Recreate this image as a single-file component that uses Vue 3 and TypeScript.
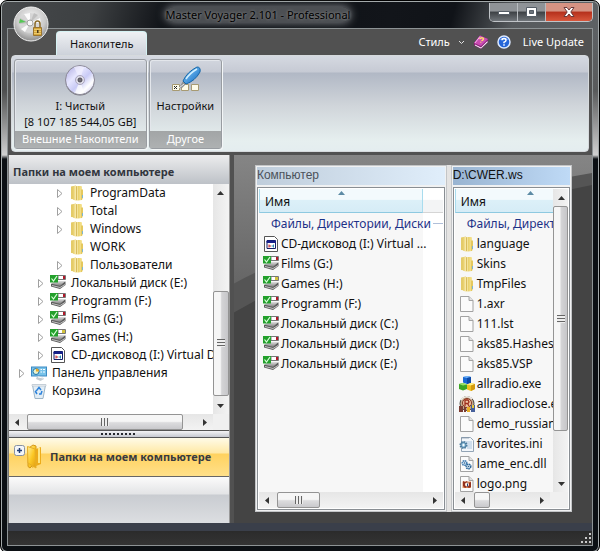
<script setup lang="ts">
interface TreeNode {
  label: string
  icon: string
  level: number
  leaf?: boolean
}
interface Entry {
  name: string
  icon: string
}

const tree: TreeNode[] = [
  { label: 'ProgramData', icon: 'folder', level: 2 },
  { label: 'Total', icon: 'folder', level: 2 },
  { label: 'Windows', icon: 'folder', level: 2 },
  { label: 'WORK', icon: 'folder', level: 2, leaf: true },
  { label: 'Пользователи', icon: 'folder', level: 2 },
  { label: 'Локальный диск (E:)', icon: 'drive', level: 1 },
  { label: 'Programm (F:)', icon: 'drive', level: 1 },
  { label: 'Films (G:)', icon: 'drive', level: 1 },
  { label: 'Games (H:)', icon: 'drive-free', level: 1 },
  { label: 'CD-дисковод (I:) Virtual Drive', icon: 'virtual', level: 1 },
  { label: 'Панель управления', icon: 'panel', level: 0 },
  { label: 'Корзина', icon: 'bin', level: 0, leaf: true },
]

const computer: Entry[] = [
  { name: 'CD-дисковод (I:) Virtual ...', icon: 'virtual' },
  { name: 'Films (G:)', icon: 'drive' },
  { name: 'Games (H:)', icon: 'drive-free' },
  { name: 'Programm (F:)', icon: 'drive' },
  { name: 'Локальный диск (C:)', icon: 'drive' },
  { name: 'Локальный диск (D:)', icon: 'drive' },
  { name: 'Локальный диск (E:)', icon: 'drive' },
]

const files: Entry[] = [
  { name: 'language', icon: 'folder' },
  { name: 'Skins', icon: 'folder' },
  { name: 'TmpFiles', icon: 'folder' },
  { name: '1.axr', icon: 'file' },
  { name: '111.lst', icon: 'file' },
  { name: 'aks85.Hashes', icon: 'file' },
  { name: 'aks85.VSP', icon: 'file' },
  { name: 'allradio.exe', icon: 'cubes' },
  { name: 'allradioclose.exe', icon: 'radio' },
  { name: 'demo_russian', icon: 'file' },
  { name: 'favorites.ini', icon: 'ini' },
  { name: 'lame_enc.dll', icon: 'dll' },
  { name: 'logo.png', icon: 'png' },
]

const indent = (n: TreeNode) => ({ paddingLeft: `${10 + n.level * 19}px` })
</script>

<template>
  <div class="window">
    <svg class="defs" width="0" height="0" aria-hidden="true">
      <defs>
        <linearGradient id="gold" x1="0" x2="1"><stop offset="0" stop-color="#e6cb62" /><stop offset=".4" stop-color="#fdf4c6" /><stop offset=".6" stop-color="#ead26e" /><stop offset="1" stop-color="#f7e596" /></linearGradient>
        <linearGradient id="orange" x1="0" x2="1" y2="1"><stop offset="0" stop-color="#fff0a0" /><stop offset=".5" stop-color="#fcc926" /><stop offset="1" stop-color="#e09a10" /></linearGradient>
        <linearGradient id="metal" x1="0" y1="0" x2="0" y2="1"><stop offset="0" stop-color="#dedede" /><stop offset="1" stop-color="#7a7a7a" /></linearGradient>
        <linearGradient id="disc" x1="0" y1="0" x2="1" y2="1"><stop offset="0" stop-color="#a8a4dc" /><stop offset=".35" stop-color="#e6e6ff" /><stop offset=".55" stop-color="#c9cbf6" /><stop offset=".75" stop-color="#fff" /><stop offset="1" stop-color="#b9b6e8" /></linearGradient>
        <linearGradient id="blue" x1="0" y1="0" x2="1" y2="1"><stop offset="0" stop-color="#8fd4ff" /><stop offset="1" stop-color="#0d66c0" /></linearGradient>
        <linearGradient id="canvas" x1="0" y1="0" x2="0" y2="1"><stop offset="0" stop-color="#858585" /><stop offset="1" stop-color="#666" /></linearGradient>
        <symbol id="folder" viewBox="0 0 16 16">
          <path d="M2 1.500 7 .5v14L2 14z" fill="#e4cb68" />
          <path d="M4 1h8.500l.5 1v13l-6 .8L4 14.500z" fill="url(#gold)" />
          <path d="M7.500 1.200v14" stroke="#d8bb5c" fill="none" />
          <path d="M12 4.500h2v8l-1 2.500h-1z" fill="#e4c85e" />
          <path d="M13.500 10v3" stroke="#7fb6d2" />
        </symbol>
        <symbol id="drive-base" viewBox="0 0 16 16">
          <path d="M1 9 7 6.500h8.500v3.500L10 14 1 11.500z" fill="#5c5c5c" />
          <path d="M1 8.500 7 6h8.500L10 11z" fill="url(#metal)" />
          <path d="m2 10.500 8 2 5-3" stroke="#c4c4c4" fill="none" />
          <path d="M8 .5h7.500v4H8z" fill="#fff" stroke="#777" />
          <path d="M0 0h8v7.500H0z" fill="#23a02c" />
          <path d="m1.500 3.500 2 2.500L7 1" stroke="#dcffdc" stroke-width="1.200" fill="none" />
        </symbol>
        <symbol id="drive" viewBox="0 0 16 16"><use href="#drive-base" /><path d="M13 1h2v3h-2z" fill="#b11829" /></symbol>
        <symbol id="drive-free" viewBox="0 0 16 16"><use href="#drive-base" /><path d="M12 1h3v3h-3z" fill="#d2c23c" /></symbol>
        <symbol id="file" viewBox="0 0 16 16">
          <path d="M1.500.5h8.500l4 4v11h-12.500z" fill="#fbfbfb" stroke="#a2a2a2" />
          <path d="M10 .5v4h4" fill="#e2e2e2" stroke="#a2a2a2" />
        </symbol>
        <symbol id="virtual" viewBox="0 0 16 16">
          <path d="M1.500.5h10l3 3v12h-13z" fill="#fff" stroke="#555" />
          <path d="M4 4.500h8.500v8H4z" fill="#fff" stroke="#111a66" />
          <path d="M4 5h8.500v1.500H4z" fill="#16208a" stroke="#16208a" />
          <path d="M5.500 8.500h1v3h-1zm1 1h1.500v1H6.500z" fill="#c4232c" /><path d="M10 8.500h1v3h-1zm-1.500 1H10v1H8.500z" fill="#2e8cb4" />
        </symbol>
        <symbol id="panel" viewBox="0 0 16 16">
          <path d="M0 1.500h16v10H0z" fill="#3b8ac4" /><path d="M1 2.500h14v8H1z" fill="#79c3e9" />
          <circle cx="5" cy="6.500" r="3" fill="#e6f2d0" stroke="#2476ac" /><path d="M5 6.500v-3a3 3 0 0 1 3 3z" fill="#eaaa29" />
          <path d="M9.500 4.500h1.500m1 0h2M9.500 7h1.500m1 0h2" stroke="#fff" />
          <path d="M6 11.500h5l2 2.500-3.500 2L5 14z" fill="#c4cdd3" /><path d="m7 12 5 1" stroke="#fff" />
        </symbol>
        <symbol id="bin" viewBox="0 0 16 16">
          <path d="M1.500 2h13L12 15.500H4z" fill="#e2edf5" stroke="#9cb4c6" /><path d="M1 1.500h14v1.500H1z" fill="#f4f7f9" stroke="#b2bdc7" stroke-width=".6" />
          <path d="m6 7 2-2.500L10 7m1 1-1 3H8m-2 0-1.500-2.500L6 7" fill="none" stroke="#2d83dc" stroke-width="1.500" />
        </symbol>
        <symbol id="cubes" viewBox="0 0 16 16">
          <path d="M4 1 9 0l3 1v6L8 8 4 6.500z" fill="#1868d2" /><path d="m4 1 5-1 3 1-4 1z" fill="#79b9fb" /><path d="m8 2 4-1v6L8 8z" fill="#0c49a6" />
          <path d="m0 8 4-1 4 1.500V13l-4 1.500L0 13z" fill="#3ca624" /><path d="m0 8 4-1 4 1.500-4 1z" fill="#9ce467" />
          <path d="m8 8.500 4-1.500 4 1v5l-4 2-4-1.500z" fill="#f0c01c" /><path d="m8 8.500 4-1.500 4 1-4 1.500z" fill="#fff085" /><path d="m12 9.500 4-1.500v5l-4 2z" fill="#d39a0d" />
        </symbol>
        <symbol id="radio" viewBox="0 0 16 16">
          <circle cx="8" cy="7.500" r="7" fill="#c4a98c" stroke="#4c4740" /><path d="M2 4a7 7 0 0 1 11-1" stroke="#eeeae4" stroke-width="1.500" fill="none" />
          <circle cx="8" cy="7" r="4.500" fill="#f0c6a6" stroke="#833522" /><path d="M6 10V4h3l1 2-1 1.500H6m2.500 0L10 10" stroke="#9c2d1c" stroke-width="1.300" fill="none" />
          <path d="M0 10h4v6H0zm5 1h2v5H5z" fill="#7b3c32" /><path d="M8 11h3v5H8z" fill="#e9ac26" /><path d="M12 9h4v7h-4z" fill="#46609b" /><path d="M13 9h2v3h-2z" fill="#e8c73b" />
        </symbol>
        <symbol id="ini" viewBox="0 0 16 16">
          <path d="M2.500 1.500h9l3 3v11h-12z" fill="#f2f6fa" stroke="#93a4b5" /><path d="M3 1v2m2-2v2m2-2v2m2-2v2" stroke="#708598" stroke-width=".6" />
          <path d="M4 6h9M8 8h5m-5 2h5m-5 2h5" stroke="#a9c4de" />
          <circle cx="4.500" cy="9" r="3" fill="#b9dbef" stroke="#4b7c9f" stroke-width="2" stroke-dasharray="1.500 .8" /><circle cx="4.500" cy="9" r="2.500" fill="#9bc8e2" stroke="#4b7c9f" /><circle cx="4.500" cy="9" r="1" fill="#fff" />
        </symbol>
        <symbol id="dll" viewBox="0 0 16 16">
          <use href="#file" /><circle cx="5.500" cy="7" r="2.300" fill="#d6e9f7" stroke="#437eb3" stroke-width="1.500" stroke-dasharray="1.500 .5" /><circle cx="9.500" cy="10.500" r="2.300" fill="#d6e9f7" stroke="#2d6799" stroke-width="1.500" stroke-dasharray="1.500 .5" />
          <circle cx="5.500" cy="7" r=".8" fill="#315f88" /><circle cx="9.500" cy="10.500" r=".8" fill="#315f88" />
        </symbol>
        <symbol id="png" viewBox="0 0 16 16">
          <use href="#file" /><path d="M3.500 5.500h8.500v6.500H3.500z" fill="#e49762" /><path d="m4 5 2 1 2-1 1 2 3-1v5l-2 1-2-1-2 1-2-2z" fill="#93301d" /><circle cx="8" cy="8.500" r="2" fill="#fff2de" /><path d="M8 7.500h1v3H8z" fill="#233f83" />
        </symbol>
      </defs>
    </svg>

    <header class="titlebar">
      <button class="orb" type="button" aria-label="Master Voyager">
        <svg viewBox="0 0 36 36" width="36" height="36">
          <defs>
            <radialGradient id="orb" cx=".5" cy=".35" r=".65"><stop offset="0" stop-color="#f6f6f6" /><stop offset=".65" stop-color="#c9c9c9" /><stop offset="1" stop-color="#8c8c8c" /></radialGradient>
          </defs>
          <circle cx="18" cy="18" r="17" fill="url(#orb)" stroke="#f2f2f2" />
          <ellipse cx="17" cy="17" rx="11" ry="10" fill="#d6d6d6" />
          <path d="m17 17-6-9 6-1zM17 17l10-5 1 5zM17 17l-5 9-4-3z" fill="#fbfbfb" />
          <path d="m17 17-10-5-1 6zM17 17l4-10 4 2z" fill="#bfbfbf" />
          <path d="m7 13 6 3-7 1z" fill="#55c755" />
          <circle cx="17" cy="17" r="3" fill="#f7f7f7" stroke="#a2a2a2" />
          <path d="M22 22v-4q0-3 2.500-3t2.500 3v4" fill="none" stroke="#8c6c2b" stroke-width="1.500" />
          <path d="M20.500 21.500h8v8h-8z" fill="#d6a73b" stroke="#9a7430" />
          <path d="M21 23.500h7m-7 2h7m-7 2h7" stroke="#f2d985" stroke-width=".7" />
          <path d="M24 24h1.500v3H24z" fill="#4b3818" />
        </svg>
      </button>
      <h1 class="caption"><span>Master Voyager 2.101 - Professional</span></h1>
      <div class="winbtns">
        <button type="button" aria-label="Свернуть"><svg width="14" height="12" viewBox="0 0 14 12"><path d="M1.500 5.500h11v3h-11z" fill="#fff" stroke="#555d66" /></svg></button>
        <button type="button" aria-label="Развернуть"><svg width="14" height="12" viewBox="0 0 14 12"><path d="M1.500 1.500h10v9h-10z" fill="#fff" stroke="#555d66" /><path d="M4.500 4.500h4v3h-4z" fill="#6c737b" stroke="#555d66" /></svg></button>
        <button type="button" class="close" aria-label="Закрыть"><svg width="14" height="12" viewBox="0 0 14 12"><path d="M2 1.500h3l2 2.500 2-2.500h3L8.800 6 12 10.500H9L7 8l-2 2.500H2L5.200 6z" fill="#fff" stroke="#6b3a3a" /></svg></button>
      </div>
    </header>

    <div class="client">
      <nav class="tabs">
        <button class="tab" type="button">Накопитель</button>
        <div class="links">
          <button class="link style" type="button">Стиль
            <svg width="7" height="5" viewBox="0 0 7 5"><path d="m1 1 2.500 2.500L6 1" fill="none" stroke="#e4e4e4" /></svg>
          </button>
          <button class="link" type="button" aria-label="Справка">
            <svg width="16" height="16" viewBox="0 0 16 16">
              <path d="M1 9 7 1.500 15 5v3l-7 7-7-3.500z" fill="#8a2378" /><path d="m2 10.500 6 3 6.500-6.500v1.500L8 14.500l-6-3z" fill="#fff" />
              <path d="M1 9 7 1.500 15 5l-7 7z" fill="#c94bb2" /><path d="m2 9 5-6.500" stroke="#f6b1e9" />
              <path d="M6.500 5q2-2 3.500-1t-1.500 3m-1 1.500.5-.5" stroke="#ffe36a" stroke-width="1.500" fill="none" />
            </svg>
          </button>
          <button class="link" type="button" aria-label="О программе">
            <svg width="14" height="14" viewBox="0 0 14 14">
              <circle cx="7" cy="7" r="6" fill="#2565d8" stroke="#dce9ff" stroke-width="1.500" /><path d="M2.500 5q4.500-5 9 0-4-1-9 0" fill="#76a7f6" />
              <path d="M5 5.200Q5 3.500 7 3.500t2 1.700Q9 6.500 7 7.300v1m0 1v1.500" fill="none" stroke="#fff" stroke-width="1.500" />
            </svg>
          </button>
          <a class="link update" href="#update">Live Update</a>
        </div>
      </nav>

      <section class="ribbon">
        <div class="group">
          <button class="tool" type="button">
            <svg width="32" height="32" viewBox="0 0 32 32">
              <circle cx="16" cy="17" r="14.500" fill="#77757e" /><circle cx="16" cy="16" r="14.500" fill="url(#disc)" stroke="#8c8a98" />
              <path d="M16 16 10 3q5-2 10 0z" fill="#f5f4ff" opacity=".6" /><path d="m16 16 4 13q-4 2-9 0z" fill="#fff" opacity=".7" />
              <circle cx="16" cy="16" r="4.500" fill="#dedde9" stroke="#aaa6be" /><circle cx="16" cy="16" r="2" fill="#716e78" stroke="#4e4c54" />
            </svg>
            <span>I: Чистый</span>
            <span>[8 107 185 544,05 GB]</span>
          </button>
          <h2>Внешние Накопители</h2>
        </div>
        <div class="group">
          <button class="tool" type="button">
            <svg width="32" height="32" viewBox="0 0 32 32">
              <path d="M3.500 20.500h7v6h-7zm9 0h7v6h-7zm10 0h7v6h-7z" fill="#fdfbe9" stroke="#a79a72" />
              <path d="m5 22 3 3m0-3-3 3" stroke="#222" />
              <path d="m10 24 4-7 3 3-4 4z" fill="#8b8f92" /><path d="m10 24 5-4" stroke="#eee" />
              <path d="M14 17q4-9 14-14Q32 3 31 8q-5 9-14 12z" fill="url(#blue)" stroke="#1667a8" /><path d="M17 15q4-6 11-10" stroke="#d4f0ff" stroke-width="1.500" fill="none" />
            </svg>
            <span>Настройки</span>
          </button>
          <h2>Другое</h2>
        </div>
      </section>

      <main class="work">
        <aside class="side">
          <h2 class="side-title">Папки на моем компьютере</h2>
          <div class="tree-box">
            <ul class="tree">
              <li v-for="n in tree" :key="n.label" :style="indent(n)">
                <svg class="arrow" width="6" height="9" viewBox="0 0 6 9"><path v-if="!n.leaf" d="M.5.5v8L5 4.500z" fill="#fff" stroke="#a0a0a0" /></svg>
                <svg width="16" height="16"><use :href="`#${n.icon}`" /></svg>
                <span>{{ n.label }}</span>
              </li>
            </ul>
            <div class="vbar">
              <button type="button" aria-label="Вверх"><svg width="7" height="4" viewBox="0 0 7 4"><path d="M0 4 3.500 0 7 4z" /></svg></button>
              <i class="before"></i><div class="thumb"><i></i></div><i class="after"></i>
              <button type="button" aria-label="Вниз"><svg width="7" height="4" viewBox="0 0 7 4"><path d="M0 0h7L3.500 4z" /></svg></button>
            </div>
          </div>
          <div class="hbar side-h">
            <button type="button" aria-label="Влево"><svg width="4" height="7" viewBox="0 0 4 7"><path d="M4 0v7L0 3.500z" /></svg></button>
            <div class="thumb"><i></i></div><i class="rest"></i>
            <button type="button" aria-label="Вправо"><svg width="4" height="7" viewBox="0 0 4 7"><path d="M0 0v7l4-3.500z" /></svg></button>
            <i class="corner"></i>
          </div>
          <div class="grip"><i></i></div>
          <button class="section" type="button">
            <svg width="30" height="26" viewBox="0 0 30 26">
              <path d="M14 4.500 19 1l3 1v16l-6 6-2-1.500z" fill="url(#orange)" stroke="#d59818" />
              <path d="m22 5 5-2v17l-5 2-4 2z" fill="#edac1b" /><path d="M13.500 2.500 21 5l1 19-8-5z" fill="url(#orange)" stroke="#e7ae26" /><path d="M25 4v15" stroke="#ffe783" stroke-width="2" />
              <rect x=".5" y="1.500" width="10" height="10" rx="2" fill="#f4f6f9" stroke="#8692a5" /><path d="M3 6.500h5M5.500 4v5" stroke="#233e75" stroke-width="1.500" />
            </svg>
            <span>Папки на моем компьютере</span>
          </button>
          <div class="side-foot"></div>
        </aside>

        <div class="canvas">
          <svg class="backdrop" viewBox="0 0 357 367" preserveAspectRatio="none" aria-hidden="true">
            <path d="M0 0h357v367H0z" fill="#444" />
            <path d="M0 0h357v30Q150 70 0 157z" fill="#555" />
            <path d="M0 0h357v18Q140 55 0 128z" fill="url(#canvas)" />
          </svg>
          <div class="panes">
            <section class="pane first">
              <h3>Компьютер</h3>
              <div class="frame">
                <div class="listrow">
                  <div class="list">
                    <table>
                      <colgroup><col class="name"><col></colgroup>
                      <thead><tr><th class="sorted" scope="col">Имя<svg width="7" height="4" viewBox="0 0 7 4"><path d="M0 4 3.500 0 7 4z" fill="#5d8ba5" /></svg></th><td class="blank"></td></tr></thead>
                      <tbody>
                        <tr class="cat"><th scope="rowgroup">Файлы, Директории, Диски</th><td><i></i></td></tr>
                        <tr v-for="e in computer" :key="e.name"><td><div class="entry"><svg width="16" height="16"><use :href="`#${e.icon}`" /></svg><span>{{ e.name }}</span></div></td><td></td></tr>
                      </tbody>
                    </table>
                  </div>
                </div>
                <div class="hbar first-h">
                  <button type="button" aria-label="Влево"><svg width="4" height="7" viewBox="0 0 4 7"><path d="M4 0v7L0 3.500z" /></svg></button>
                  <div class="thumb"><i></i></div><i class="rest"></i>
                  <button type="button" aria-label="Вправо"><svg width="4" height="7" viewBox="0 0 4 7"><path d="M0 0v7l4-3.500z" /></svg></button>
                </div>
              </div>
            </section>
            <section class="pane second">
              <h3>D:\CWER.ws</h3>
              <div class="frame">
                <div class="listrow">
                  <div class="list">
                    <table>
                      <thead><tr><th class="sorted" scope="col">Имя<svg width="7" height="4" viewBox="0 0 7 4"><path d="M0 4 3.500 0 7 4z" fill="#5d8ba5" /></svg></th></tr></thead>
                      <tbody>
                        <tr class="cat"><th scope="rowgroup">Файлы, Директории</th></tr>
                        <tr v-for="e in files" :key="e.name"><td><div class="entry"><svg width="16" height="16"><use :href="`#${e.icon}`" /></svg><span>{{ e.name }}</span></div></td></tr>
                      </tbody>
                    </table>
                  </div>
                  <div class="vbar">
                    <button type="button" aria-label="Вверх"><svg width="7" height="4" viewBox="0 0 7 4"><path d="M0 4 3.500 0 7 4z" /></svg></button>
                    <div class="thumb"><i></i></div><i class="after"></i>
                    <button type="button" aria-label="Вниз"><svg width="7" height="4" viewBox="0 0 7 4"><path d="M0 0h7L3.500 4z" /></svg></button>
                  </div>
                </div>
                <div class="hbar second-h">
                  <button type="button" aria-label="Влево"><svg width="4" height="7" viewBox="0 0 4 7"><path d="M4 0v7L0 3.500z" /></svg></button>
                  <div class="thumb"></div><i class="rest"></i>
                  <button type="button" aria-label="Вправо"><svg width="4" height="7" viewBox="0 0 4 7"><path d="M0 0v7l4-3.500z" /></svg></button>
                  <i class="corner"></i>
                </div>
              </div>
            </section>
          </div>
        </div>
      </main>

      <footer class="status">
        <svg width="11" height="11" viewBox="0 0 11 11"><path d="M8 0h2v2H8zM4 4h2v2H4zm4 0h2v2H8zM0 8h2v2H0zm4 0h2v2H4zm4 0h2v2H8z" fill="#c9c9c9" /></svg>
      </footer>
    </div>
  </div>
</template>

<style>
body { background: #fff; }
</style>

<style scoped>
* { box-sizing: border-box; }
h1, h2, h3, ul { margin: 0; padding: 0; font-weight: 400; font-size: 11px; list-style: none; }
button { margin: 0; padding: 0; border: 0; background: none; font: inherit; color: inherit; }
svg { display: block; flex: none; }
.defs { position: absolute; }

.window {
  position: relative;
  display: flex;
  flex-direction: column;
  min-height: 100vh;
  padding: 2px 6px 6px;
  border: 1px solid #000;
  border-radius: 7px;
  background: linear-gradient(180deg, transparent 28px, #5559 90px, #d0d0d0 154px, #0c1014 158px), linear-gradient(105deg, #46494b 0, #3d4042 90px, #0c0f14 170px, #12151a 380px, #101318 440px, #565a5d 500px, #6a6d70 100%);
  box-shadow: inset 0 0 0 1px #a3a9aa;
  color: #111;
  font: 12px/16px "Noto Sans", "Open Sans", sans-serif;
}
.titlebar { display: flex; height: 25px; align-items: flex-start; padding-left: 44px; }
.orb { position: absolute; left: 12px; top: 5px; z-index: 2; }
.caption { flex: 1; padding: 4px 24px 0 0; text-align: center; color: #000; line-height: 16px; white-space: nowrap; }
.caption span { border-radius: 8px; background: #74787c99; box-shadow: 0 0 9px 1px #7d8185; text-shadow: 0 0 3px #999; }
.winbtns { display: flex; height: 19px; border: 1px solid #c0c4c8; border-top: 0; border-radius: 0 0 5px 5px; overflow: hidden; }
.winbtns button { display: flex; width: 28px; align-items: center; justify-content: center; border-right: 1px solid #b8bcc0; background: linear-gradient(#8f9397 0 45%, #3d4145 50%, #70757a); }
.winbtns button.close { width: 46px; border: 0; background: linear-gradient(#d69383 0 45%, #b5301c 50%, #d8573c); }

.client { display: flex; flex: 1; flex-direction: column; border: 1px solid #8d9395; background: #515151; }
.tabs { display: flex; height: 26px; align-items: flex-end; padding: 0 8px 0 48px; justify-content: space-between; font-size: 11px; }
.tab { height: 24px; padding: 0 13px; border: 1px solid #d5f2f3; border-bottom: 0; border-radius: 4px 4px 0 0; background: linear-gradient(#eef0f3, #cdd2da); }
.links { display: flex; height: 26px; align-items: center; gap: 8px; color: #fff; }
.link { color: #fff; text-decoration: none; }
.style { display: flex; align-items: center; gap: 8px; }
.update { padding-left: 4px; }

.ribbon { display: flex; gap: 2px; height: 97px; margin: 0 3px; padding: 3px 2px 2px; border: 1px solid #d6dadd; border-radius: 4px; background: linear-gradient(#d5d9e1 0, #c6cad4 16px, #b1b8c5 17px, #d0d5da 50px, #e6efef 85px, #e4edef); font-size: 11px; }
.group { display: flex; flex-direction: column; border: 1px solid #989ca1; border-radius: 3px; box-shadow: 1px 1px 0 #f3f6f7, inset 1px 1px 0 #e3e6eb; }
.tool { display: flex; flex: 1; flex-direction: column; align-items: center; padding: 4px 7px 0; }
.tool svg { margin-bottom: 2px; }
.group h2 { height: 17px; padding: 0 7px; background: linear-gradient(#a2a5a6, #aeb1b2); color: #fff; text-align: center; line-height: 16px; white-space: nowrap; }

.work { display: flex; flex: 1; margin-top: 3px; }
.side { display: flex; flex-direction: column; width: 38%; border-left: 1px solid #777; border-right: 1px solid #999; }
.side-title { height: 29px; padding: 4px 4px 0; background: linear-gradient(#ececec 0, #e4e5e7 5px, #bdc1c7); color: #32363e; font-weight: 700; line-height: 26px; white-space: nowrap; }
.tree-box { display: flex; flex: 1; background: #fff; }
.tree { flex: 1; width: 0; overflow: hidden; font-size: 12px; }
.tree li { display: flex; height: 18px; align-items: center; white-space: nowrap; }
.arrow { margin-right: 6px; }
.tree span { margin-left: 5px; }

.vbar, .hbar { display: flex; background: linear-gradient(90deg, #e6e6e6, #f3f3f3); fill: #333; }
.vbar { flex-direction: column; width: 16px; }
.hbar { height: 16px; background: linear-gradient(#e6e6e6, #f3f3f3); }
.vbar button, .hbar button { display: flex; width: 16px; height: 17px; align-items: center; justify-content: center; }
.hbar button { height: 16px; }
.thumb { display: flex; align-items: center; justify-content: center; border: 1px solid #949494; border-radius: 2px; background: linear-gradient(90deg, #f6f6f6 0 45%, #d4d4d6 55%, #c6c6c9); }
.hbar .thumb { background: linear-gradient(#f6f6f6 0 45%, #dcdcde 55%, #c9c9cc); }
.thumb i { width: 8px; height: 8px; background: repeating-linear-gradient(#666 0 1px, #eee 1px 3px); }
.hbar .thumb i { background: repeating-linear-gradient(90deg, #666 0 1px, #eee 1px 3px); }
.side .before { flex: 90; }
.side .vbar .thumb { flex: 104; }
.side .after { flex: 1; }
.side-h .thumb { flex: 156; margin-left: 2px; }
.side-h .rest { flex: 14; }
.side-h .corner { width: 16px; background: #f0f0f0; }

.grip { display: flex; height: 8px; align-items: center; justify-content: center; border: 1px solid #555; border-width: 1px 0; background: linear-gradient(#f4f4f6, #c5c8d0); }
.grip i { width: 35px; height: 2px; background: repeating-linear-gradient(90deg, #26282e 0 2px, transparent 2px 4px); }
.section { display: flex; height: 39px; align-items: center; gap: 6px; padding-left: 5px; border-bottom: 1px solid #666; background: linear-gradient(#fffbe8 0, #ffe9a6 15px, #ffd25f 16px, #ffe08a); color: #383a40; font-size: 11px; font-weight: 700; white-space: nowrap; }
.side-foot { height: 46px; background: linear-gradient(#fbfbfb 0, #e3e4e6 17px, #c9ccd1 18px, #dcdee1); }

.canvas { display: grid; flex: 1; margin-left: 4px; }
.backdrop { grid-area: 1 / 1; width: 100%; height: 100%; min-height: 0; }
.panes { grid-area: 1 / 1; display: flex; gap: 4px; margin: 10px 20px 11px 21px; background: #e4e3e2; z-index: 1; }
.pane { display: flex; flex-direction: column; width: 0; padding: 2px; background: #f0f1f2; box-shadow: inset 0 0 0 1px #c3c5c7; }
.first { flex: 192; }
.second { flex: 120; }
.pane h3 { height: 18px; margin-bottom: 2px; background: linear-gradient(90deg, #bfcddb, #e0eefb); color: #4c525a; font: 12px/16px "Liberation Sans", sans-serif; }
.pane.second h3 { background: linear-gradient(90deg, #99b4d1, #bfdaf6); color: #111; }
.frame { display: flex; flex: 1; flex-direction: column; border: 1px solid #898e93; padding: 1px; background: #fff; }
.listrow { display: flex; flex: 1; min-height: 240px; }
.list { flex: 1 1 0; width: 0; height: 0; min-height: 100%; overflow: hidden; background: #fff; }
.first .list { background: linear-gradient(90deg, #f7f7f7 164px, #fff 164px); }
.second .list { background: #f7f7f7; }
table { width: 100%; border-collapse: separate; border-spacing: 0; table-layout: fixed; }
.second table { width: 150px; }
col.name { width: 164px; }
th, td { padding: 0; font-weight: 400; text-align: left; white-space: nowrap; }
thead th, thead td { position: relative; height: 24px; border-bottom: 1px solid #8ec9e0; background: linear-gradient(#f3fafd 0 45%, #dcf0f8 50%, #d6ecf6); }
thead th { padding: 2px 0 0 5px; border-left: 1px solid #a9dcee; border-right: 1px solid #a9dcee; }
thead svg { position: absolute; top: 2px; left: 50%; margin-left: -3px; }
thead td.blank { border-color: #d5d5d5; background: linear-gradient(#fff 45%, #f3f4f5 50%); }
.cat th { height: 21px; padding-left: 12px; color: #1e3287; }
.cat i { display: block; height: 1px; margin-left: 10px; background: #b0bfd9; }
.entry { display: flex; height: 20px; align-items: center; gap: 2px; padding-left: 4px; }
.second .vbar { width: 15px; }
.second .vbar .thumb { flex: 224; }
.second .vbar .after { flex: 44; }
.first-h .thumb { flex: 43; margin-left: 2px; }
.first-h .rest { flex: 110; }
.second-h .thumb { flex: 15; margin-left: 3px; }
.second-h .rest { flex: 46; }
.second-h .corner { width: 18px; background: #f0f0f0; }

.status { display: flex; height: 22px; align-items: flex-end; justify-content: flex-end; border-top: 8px solid #3a3f4a; background: linear-gradient(#2b2b2b, #343434); padding: 0 0 1px; }
</style>
